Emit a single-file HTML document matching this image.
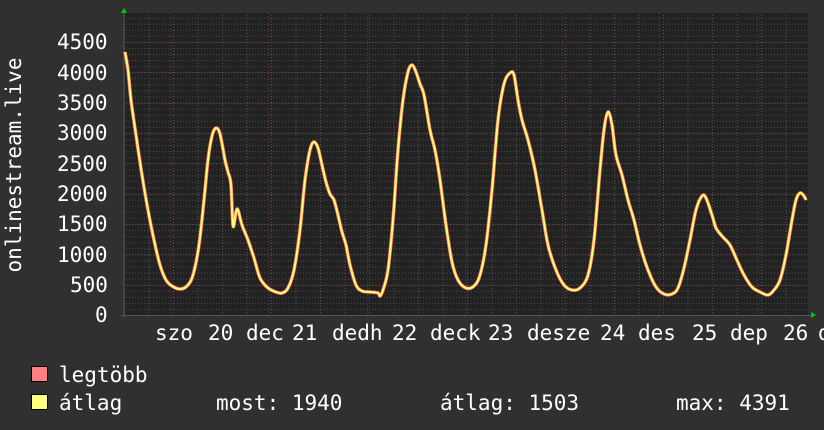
<!DOCTYPE html>
<html><head><meta charset="utf-8"><style>
html,body{margin:0;padding:0;background:#303030;}
body{width:824px;height:430px;overflow:hidden;position:relative;font-family:"DejaVu Sans Mono","Liberation Mono",monospace;color:#fff;}
.t{position:absolute;font-size:21px;line-height:1;white-space:pre;}
</style></head><body>
<svg width="824" height="430" style="position:absolute;left:0;top:0" xmlns="http://www.w3.org/2000/svg">
<defs>
<pattern id="vmin" x="124" y="0" width="24.5" height="430" patternUnits="userSpaceOnUse">
<line x1="0.5" y1="0" x2="0.5" y2="430" stroke="#555" stroke-dasharray="1,2"/>
</pattern>
<pattern id="hmin" x="0" y="315" width="824" height="6.07" patternUnits="userSpaceOnUse">
<line x1="0" y1="0.5" x2="824" y2="0.5" stroke="#4a4a4a" stroke-dasharray="1,2"/>
</pattern>
</defs>
<rect x="124" y="13" width="684" height="302" fill="#222"/>
<rect x="124" y="13" width="684" height="302" fill="url(#hmin)"/>
<rect x="124" y="13" width="684" height="302" fill="url(#vmin)"/>
<g stroke="#6a3434" stroke-dasharray="1,2">
<line x1="124" y1="42.5" x2="808" y2="42.5"/><line x1="124" y1="72.5" x2="808" y2="72.5"/>
<line x1="124" y1="103.5" x2="808" y2="103.5"/><line x1="124" y1="133.5" x2="808" y2="133.5"/>
<line x1="124" y1="163.5" x2="808" y2="163.5"/><line x1="124" y1="194.5" x2="808" y2="194.5"/>
<line x1="124" y1="224.5" x2="808" y2="224.5"/><line x1="124" y1="254.5" x2="808" y2="254.5"/>
<line x1="124" y1="285.5" x2="808" y2="285.5"/>
<line x1="170.5" y1="13" x2="170.5" y2="318"/><line x1="268.5" y1="13" x2="268.5" y2="318"/>
<line x1="367.5" y1="13" x2="367.5" y2="318"/><line x1="465.5" y1="13" x2="465.5" y2="318"/>
<line x1="562.5" y1="13" x2="562.5" y2="318"/><line x1="659.5" y1="13" x2="659.5" y2="318"/>
<line x1="757.5" y1="13" x2="757.5" y2="318"/>
</g>
<line x1="124" y1="13" x2="124" y2="318" stroke="#555"/>
<line x1="121" y1="315.5" x2="812" y2="315.5" stroke="#555"/>
<polygon points="121,13 127,13 124,8" fill="#0c0"/>
<polygon points="811,312 811,318 816,315" fill="#0c0"/>
<path id="c" fill="none" stroke-linejoin="round" d="M125,52 L128,70 131,100 136,135 142,175 148,210 154,240 160,265 166,280 172,286 180,289 187,286 193,275 199,245 204,200 208,160 212,136 216,128 220,134 225,160 228,172 231,185 233,226 236,212 238,210 242,225 248,240 254,258 260,278 268,288 276,292 282,293 288,288 294,270 300,230 305,180 310,150 314,142 318,148 322,165 326,182 330,194 334,200 338,215 342,232 346,245 350,265 356,285 362,291 370,292 378,293 380,296 383,290 388,270 393,220 398,150 403,100 408,72 412,65 416,72 420,84 424,95 430,130 435,150 440,180 446,225 452,262 458,280 466,288 474,286 480,275 486,245 492,190 498,120 504,84 510,73 514,75 518,100 522,120 528,140 535,170 542,210 548,245 556,270 564,285 572,290 580,288 588,275 594,240 600,170 604,130 608,112 612,125 616,155 622,175 628,200 634,220 640,245 648,270 656,287 664,294 672,294 678,288 684,268 690,240 696,210 702,196 706,198 712,215 716,228 722,236 730,245 736,258 744,275 752,287 760,292 768,295 774,290 780,280 786,255 792,220 796,200 800,193 804,196 806,200"/>
<use id="u1" href="#c" stroke="#ff7070" stroke-width="3.5" fill="none"/>
<use id="u2" href="#c" stroke="#ffff70" stroke-width="2" fill="none"/>
<text x="14" y="165" fill="#fff" font-family="DejaVu Sans Mono,Liberation Mono,monospace" font-size="21" text-anchor="middle" transform="rotate(-90 14 165)" dominant-baseline="central">onlinestream.live</text>
<rect x="31.5" y="366.5" width="16" height="15" fill="#ff8080" stroke="#000"/>
<rect x="31.5" y="394.5" width="16" height="15" fill="#ffff80" stroke="#000"/>
</svg>
<script>
(function(){
var p=document.getElementById('c');var d=p.getAttribute('d').replace(/[ML]/g,' ').trim().split(/\s+/).map(function(s){return s.split(',').map(Number);});
var out='M'+d[0][0]+','+d[0][1];
for(var i=0;i<d.length-1;i++){var p0=d[Math.max(0,i-1)],p1=d[i],p2=d[i+1],p3=d[Math.min(d.length-1,i+2)];
var c1=[p1[0]+(p2[0]-p0[0])/6,p1[1]+(p2[1]-p0[1])/6],c2=[p2[0]-(p3[0]-p1[0])/6,p2[1]-(p3[1]-p1[1])/6];
out+=' C'+c1[0].toFixed(1)+','+c1[1].toFixed(1)+' '+c2[0].toFixed(1)+','+c2[1].toFixed(1)+' '+p2[0]+','+p2[1];}
p.setAttribute('d',out);})();
</script>
<div class="t" style="left:57px;top:32px">4500</div>
<div class="t" style="left:57px;top:63px">4000</div>
<div class="t" style="left:57px;top:93px">3500</div>
<div class="t" style="left:57px;top:123px">3000</div>
<div class="t" style="left:57px;top:154px">2500</div>
<div class="t" style="left:57px;top:184px">2000</div>
<div class="t" style="left:57px;top:214px">1500</div>
<div class="t" style="left:57px;top:245px">1000</div>
<div class="t" style="left:70px;top:275px">500</div>
<div class="t" style="left:95px;top:305px">0</div>
<div class="t" style="left:155px;top:323px">szo</div>
<div class="t" style="left:208px;top:323px">20</div>
<div class="t" style="left:246px;top:323px">dec</div>
<div class="t" style="left:292px;top:323px">21</div>
<div class="t" style="left:332px;top:323px">dedh</div>
<div class="t" style="left:392px;top:323px">22</div>
<div class="t" style="left:430px;top:323px">deck</div>
<div class="t" style="left:488px;top:323px">23</div>
<div class="t" style="left:527px;top:323px">desze</div>
<div class="t" style="left:600px;top:323px">24</div>
<div class="t" style="left:638px;top:323px">des</div>
<div class="t" style="left:692px;top:323px">25</div>
<div class="t" style="left:730px;top:323px">dep</div>
<div class="t" style="left:783px;top:323px">26</div>
<div class="t" style="left:818px;top:323px">d</div>
<div class="t" style="left:59px;top:365px">legtöbb</div>
<div class="t" style="left:59px;top:393px">átlag</div>
<div class="t" style="left:216px;top:393px">most: 1940</div>
<div class="t" style="left:440px;top:393px">átlag: 1503</div>
<div class="t" style="left:676px;top:393px">max: 4391</div>
</body></html>
